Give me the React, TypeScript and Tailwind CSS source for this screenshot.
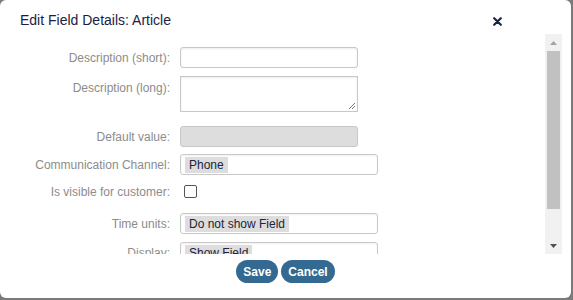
const labelCls = 'w-[170px] shrink-0 pr-0 text-right text-[12px] text-[#8c8c8c]'

const Row = ({ label, className, top, children }: { label: string; className: string; top?: boolean; children: React.ReactNode }) => (
  <div className={`flex gap-[10px] ${top ? 'items-start' : 'items-center'} ${className}`}>
    <div className={`${labelCls} ${top ? 'pt-[3px]' : ''}`}>{label}</div>
    {children}
  </div>
)

const Chip = ({ text }: { text: string }) => (
  <div className="flex h-[21px] w-[198px] items-center rounded-[3px] border border-[#c8c8c8] px-[4px] shadow-[inset_0_1px_2px_rgba(0,0,0,0.06)]">
    <span className="bg-[#dddddd] px-[4px] text-[12px] leading-[16px] text-[#22223a]">{text}</span>
  </div>
)

export default function App() {
  return (
    <div className="h-[300px] w-[573px] overflow-hidden bg-[#7a7a7a] font-['Liberation_Sans',Arial,sans-serif]">
      <div className="flex h-[298px] w-[571px] flex-col rounded-[6px] bg-white">
        <div className="flex h-[34px] shrink-0 items-center justify-between pl-[20px] pr-[69px] pt-[6px]">
          <h1 className="text-[14px] text-[#1c1c44]">Edit Field Details: Article</h1>
          <svg width="9" height="9" viewBox="0 0 9 9" className="mt-[2px]">
            <path d="M1.2 1.2 L7.8 7.8 M7.8 1.2 L1.2 7.8" stroke="#17264a" strokeWidth="2.2" strokeLinecap="round" />
          </svg>
        </div>

        <div className="flex h-[220px] shrink-0">
          <div className="w-[545px] overflow-hidden">
            <Row label="Description (short):" className="mt-[13px] h-[21px]">
              <div className="h-[21px] w-[178px] rounded-[3px] border border-[#c8c8c8] shadow-[inset_0_1px_2px_rgba(0,0,0,0.08)]" />
            </Row>
            <Row label="Description (long):" className="mt-[8px]" top>
              <div className="relative h-[36px] w-[178px] border border-[#c8c8c8] shadow-[inset_0_1px_2px_rgba(0,0,0,0.08)]">
                <svg width="8" height="8" viewBox="0 0 8 8" className="absolute bottom-[1px] right-[1px]">
                  <path d="M7 1 L1 7 M7 4 L4 7" stroke="#777" strokeWidth="1" />
                </svg>
              </div>
            </Row>
            <Row label="Default value:" className="mt-[14px] h-[21px]">
              <div className="h-[21px] w-[178px] rounded-[3px] border border-[#c8c8c8] bg-[#dddddd]" />
            </Row>
            <Row label="Communication Channel:" className="mt-[7px] h-[21px]">
              <Chip text="Phone" />
            </Row>
            <Row label="Is visible for customer:" className="mt-[6px] h-[21px]">
              <div className="ml-[4px] h-[13px] w-[13px] rounded-[2px] border border-[#555] bg-white" />
            </Row>
            <Row label="Time units:" className="mt-[11px] h-[21px]">
              <Chip text="Do not show Field" />
            </Row>
            <Row label="Display:" className="mt-[8px] h-[21px]">
              <Chip text="Show Field" />
            </Row>
          </div>

          <div className="flex w-[17px] flex-col bg-[#f1f1f1]">
            <div className="flex h-[17px] items-center justify-center">
              <svg width="7" height="4" viewBox="0 0 7 4">
                <path d="M0 4 L3.5 0 L7 4 Z" fill="#a3a3a3" />
              </svg>
            </div>
            <div className="mx-[2px] h-[158px] bg-[#c1c1c1]" />
            <div className="flex-1" />
            <div className="flex h-[17px] items-center justify-center">
              <svg width="7" height="4" viewBox="0 0 7 4">
                <path d="M0 0 L7 0 L3.5 4 Z" fill="#505050" />
              </svg>
            </div>
          </div>
        </div>

        <div className="mt-[6px] flex justify-center gap-[3px]">
          <button className="h-[23px] rounded-full bg-[#346a91] px-[7px] text-[12px] font-bold text-white">Save</button>
          <button className="h-[23px] rounded-full bg-[#346a91] px-[7px] text-[12px] font-bold text-white">Cancel</button>
        </div>
      </div>
    </div>
  )
}
